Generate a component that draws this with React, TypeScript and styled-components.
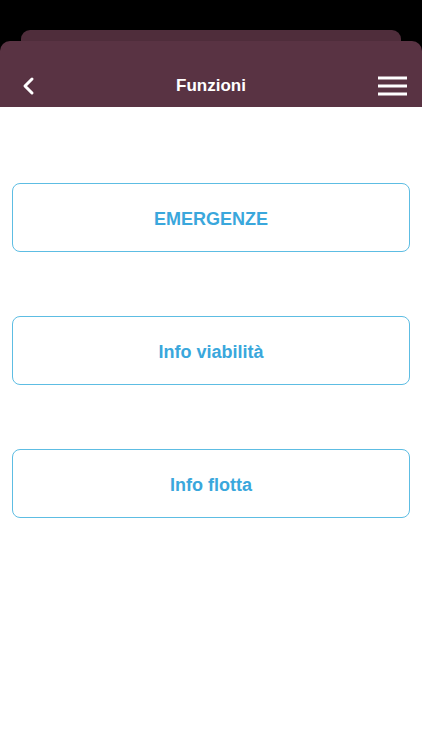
import styled, { createGlobalStyle } from "styled-components";

const GlobalStyle = createGlobalStyle`
    html, body {
        margin: 0;
        padding: 0;
        background: #ffffff;
        font-family: "Liberation Sans", Arial, sans-serif;
    }
`

const Screen = styled.div`
    width: 422px;
    height: 750px;
    display: flex;
    flex-direction: column;
    background: #ffffff;
    overflow: hidden;
`

const Top = styled.div`
    background: #000000;
    padding-top: 30px;
    display: flex;
    flex-direction: column;
`

const BackSheet = styled.div`
    height: 11px;
    margin: 0 21px;
    background: #4f2d3b;
    border-radius: 9px 9px 0 0;
`

const Header = styled.header`
    height: 66px;
    background: #593343;
    border-radius: 10px 10px 0 0;
    display: flex;
    align-items: center;
    justify-content: space-between;
    padding: 24px 15px 0 20px;
    box-sizing: border-box;
    position: relative;
`

const Title = styled.h1`
    position: absolute;
    left: 0;
    right: 0;
    top: 24px;
    bottom: 0;
    margin: 0;
    display: flex;
    align-items: center;
    justify-content: center;
    font-size: 17px;
    font-weight: bold;
    color: #ffffff;
    pointer-events: none;
`

const IconButton = styled.button`
    background: none;
    border: none;
    padding: 0;
    display: flex;
    align-items: center;
    justify-content: center;
    cursor: pointer;
    position: relative;
    z-index: 1;
`

const Menu = styled.div`
    display: flex;
    flex-direction: column;
    padding: 76px 12px 0;
    gap: 64px;
`

const MenuButton = styled.button`
    height: 69px;
    width: 100%;
    padding: 3px 0 0;
    background: #ffffff;
    border: 1px solid #5dbde3;
    border-radius: 8px;
    font-family: "Liberation Sans", Arial, sans-serif;
    font-size: 18px;
    font-weight: bold;
    color: #3aa7dc;
    cursor: pointer;
`

const items = ["EMERGENZE", "Info viabilità", "Info flotta"];

export default function App() {
    return (
        <Screen>
            <GlobalStyle />
            <Top>
                <BackSheet />
                <Header>
                    <IconButton aria-label="back">
                        <svg width="16" height="20" viewBox="0 0 16 20">
                            <path d="M12 3 L5 10 L12 17" fill="none" stroke="#fff" strokeWidth="3" strokeLinecap="round" strokeLinejoin="round" />
                        </svg>
                    </IconButton>
                    <Title>Funzioni</Title>
                    <IconButton aria-label="menu">
                        <svg width="29" height="20" viewBox="0 0 29 20">
                            <rect x="0" y="0.5" width="29" height="3" fill="#fff" />
                            <rect x="0" y="8.5" width="29" height="3" fill="#fff" />
                            <rect x="0" y="16.5" width="29" height="3" fill="#fff" />
                        </svg>
                    </IconButton>
                </Header>
            </Top>
            <Menu>
                {items.map(e => <MenuButton key={e}>{e}</MenuButton>)}
            </Menu>
        </Screen>
    )
}
